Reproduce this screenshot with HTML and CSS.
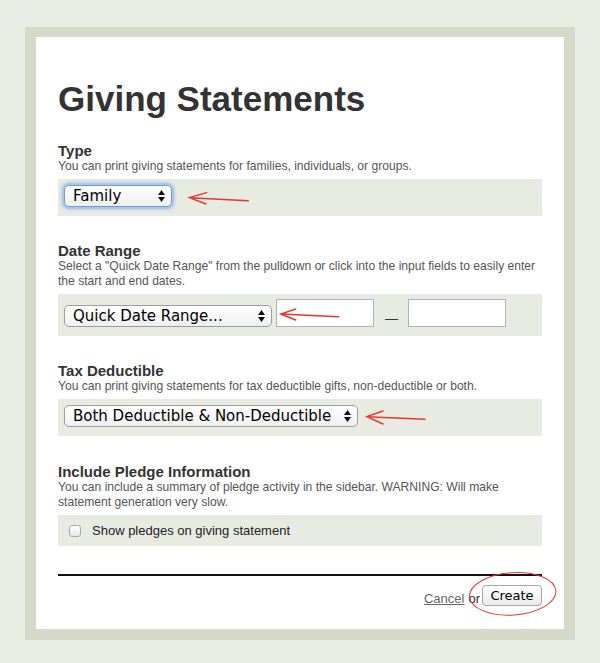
FILE: index.html
```html
<!DOCTYPE html>
<html lang="en">
<head>
  <meta charset="UTF-8">
  <title>Giving Statements</title>
  <link rel="stylesheet" href="styles.css">
</head>
<body>

  <div class="page">
    <div class="sheet">
      <h1>Giving Statements</h1>

      <form id="statementForm">
        <div class="field first">
          <h3>Type</h3>
          <p class="hint">You can print giving statements for families, individuals, or groups.</p>
          <div class="field-row">
            <div class="select-wrap type-select focused">
              <select name="type">
                <option>Family</option>
                <option>Individual</option>
                <option>Group</option>
              </select>
              <svg class="updown" width="7" height="12" viewBox="0 0 7 12"><path d="M0 5 L3.5 0 L7 5 Z M0 7 L7 7 L3.5 12 Z"/></svg>
            </div>
          </div>
        </div>

        <div class="field">
          <h3>Date Range</h3>
          <p class="hint">Select a "Quick Date Range" from the pulldown or click into the input fields to easily enter the start and end dates.</p>
          <div class="field-row date-row">
            <div class="select-wrap range-select">
              <select name="range">
                <option>Quick Date Range...</option>
              </select>
              <svg class="updown" width="7" height="12" viewBox="0 0 7 12"><path d="M0 5 L3.5 0 L7 5 Z M0 7 L7 7 L3.5 12 Z"/></svg>
            </div>
            <input type="text" class="date" name="start">
            <span class="dash">—</span>
            <input type="text" class="date" name="end">
          </div>
        </div>

        <div class="field">
          <h3>Tax Deductible</h3>
          <p class="hint">You can print giving statements for tax deductible gifts, non-deductible or both.</p>
          <div class="field-row">
            <div class="select-wrap tax-select">
              <select name="tax">
                <option>Both Deductible &amp; Non-Deductible</option>
              </select>
              <svg class="updown" width="7" height="12" viewBox="0 0 7 12"><path d="M0 5 L3.5 0 L7 5 Z M0 7 L7 7 L3.5 12 Z"/></svg>
            </div>
          </div>
        </div>

        <div class="field pledge">
          <h3>Include Pledge Information</h3>
          <p class="hint">You can include a summary of pledge activity in the sidebar. WARNING: Will make statement generation very slow.</p>
          <div class="field-row check-row">
            <label class="check">
              <input type="checkbox" name="pledges">
              Show pledges on giving statement
            </label>
          </div>
        </div>

        <div class="actions">
          <a href="#" class="cancel">Cancel</a>
          <span class="or">or</span>
          <button type="submit" class="create">Create</button>
        </div>
      </form>
    </div>
  </div>

  <!-- annotations drawn over the screenshot -->
  <svg class="marks" width="600" height="663" viewBox="0 0 600 663">
    <g fill="none" stroke="#e8372d" stroke-width="1.4" stroke-linecap="round">
      <path d="M248.3 200.7 L189.3 197.7 M206.7 192.7 L189.3 197.7 L206 204"/>
      <path d="M338.7 316.7 L280.7 314 M295.7 309 L280.7 314 L295.7 320"/>
      <path d="M425 419.3 L366.7 416.7 M383 411 L366.7 416.7 L383 424"/>
      <ellipse cx="512.7" cy="593.8" rx="43.3" ry="21.2" stroke-width="1" transform="rotate(-4 512.7 593.8)"/>
    </g>
  </svg>

</body>
</html>
```

FILE: styles.css
```css
* {
  box-sizing: border-box;
}
body {
  margin: 0;
  background: #e9ece3;
  font-family: "Liberation Sans", Arial, sans-serif;
  color: #333;
  position: relative;
}
.page {
  padding: 27px 25px 22px;
}
.sheet {
  background: #fff;
  border: 11px solid #d5d9ca;
  border-top-width: 10px;
  padding: 42px 22px 23px;
}
h1 {
  margin: 0;
  font-size: 35px;
  line-height: 40px;
  font-weight: bold;
  color: #333;
}
.field {
  margin-top: 27px;
}
.field.first {
  margin-top: 24px;
}
.field.pledge {
  margin-top: 28px;
}
.field h3 {
  margin: 0;
  font-size: 15px;
  line-height: 16px;
  font-weight: bold;
  color: #333;
}
.hint {
  margin: 0;
  font-size: 12.1px;
  line-height: 15px;
  color: #555;
}
.field-row {
  margin-top: 5px;
  background: #e8ebe2;
  padding: 6px 6px 9px;
  display: flex;
  align-items: flex-end;
}
.date-row {
  padding: 5px 6px 9px;
}
.check-row {
  padding: 0 6px;
  height: 31px;
  align-items: center;
}

.select-wrap {
  position: relative;
  height: 22px;
}
.select-wrap select {
  appearance: none;
  -webkit-appearance: none;
  width: 100%;
  height: 22px;
  margin: 0;
  padding: 0 22px 0 8px;
  border: 1px solid #9c9c9c;
  border-radius: 5px;
  background: linear-gradient(#ffffff, #f0f0f0);
  font-family: "DejaVu Sans", sans-serif;
  font-size: 15px;
  line-height: 20px;
  color: #000;
}
.updown {
  position: absolute;
  right: 7px;
  top: 5px;
  fill: #111;
  pointer-events: none;
}
.type-select {
  width: 108px;
}
.focused select {
  border-color: #6f9ed6;
  box-shadow: 0 0 0 2px #a8c6ee, 0 0 3px 3px rgba(120, 160, 220, 0.35);
}
.range-select {
  width: 208px;
}
.tax-select {
  width: 294px;
}

.date {
  width: 98px;
  height: 28px;
  margin: 0 0 0 4px;
  border: 1px solid #b3b3b3;
  background: #fff;
  padding: 2px 4px;
}
.dash {
  width: 13px;
  overflow: visible;
  text-align: center;
  font-size: 13px;
  line-height: 13px;
  color: #333;
  margin: 0 6px 2px 11px;
}

.check {
  display: flex;
  align-items: center;
  font-size: 13px;
  color: #222;
}
.check input {
  appearance: none;
  -webkit-appearance: none;
  width: 12px;
  height: 12px;
  margin: 0 11px 0 5px;
  border: 1px solid #a9a9a9;
  border-radius: 3px;
  background: linear-gradient(#ffffff, #e6e6e6);
}

.actions {
  margin-top: 28px;
  border-top: 2px solid #111;
  padding-top: 9px;
  display: flex;
  justify-content: flex-end;
  align-items: flex-end;
  font-size: 13px;
  line-height: 15px;
}
.cancel {
  color: #666;
  text-decoration: underline;
}
.or {
  margin: 0 2px 0 4px;
  color: #333;
}
.create {
  width: 60px;
  height: 21px;
  padding: 0;
  border: 1px solid #a6a6a6;
  border-radius: 4px;
  background: linear-gradient(#ffffff, #ebebeb);
  font-family: "DejaVu Sans", sans-serif;
  font-size: 13px;
  color: #000;
  cursor: pointer;
}

.marks {
  position: absolute;
  top: 0;
  left: 0;
  pointer-events: none;
}
```
